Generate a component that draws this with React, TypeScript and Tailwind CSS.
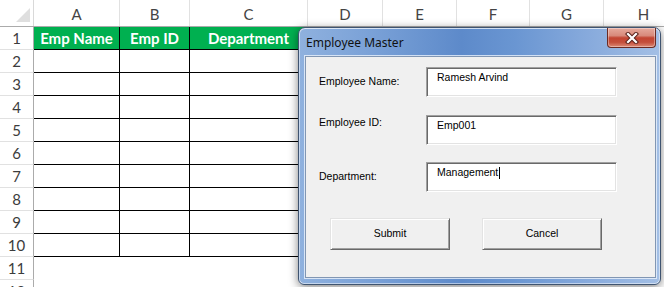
import React from "react";

const colW = [86, 70, 118, 75, 74, 73, 74, 80];
const letters = ["A", "B", "C", "D", "E", "F", "G", "H"];
const greenHead = ["Emp Name", "Emp ID", "Department"];

function HeaderRow() {
  return (
    <div className="flex h-[27px] shrink-0 border-b border-[#ababab] bg-white">
      <div className="relative w-[34px] shrink-0 border-r border-[#d9d9d9]">
        <svg className="absolute left-[16px] top-[8px]" width="14" height="14" viewBox="0 0 14 14">
          <polygon points="14,0 14,14 0,14" fill="#dfdfdf" />
        </svg>
      </div>
      {letters.map((l, i) => (
        <div
          key={l}
          style={{ width: colW[i] }}
          className="flex shrink-0 items-center justify-center border-r border-[#e1e1e1] pt-[2px] text-[15px] text-[#444]"
        >
          {l}
        </div>
      ))}
    </div>
  );
}

function DataRow({ n }: { n: number }) {
  const inTable = n <= 10;
  return (
    <div className="flex h-[23px] shrink-0">
      <div className="flex w-[34px] shrink-0 items-center justify-center border-b border-r border-b-[#e1e1e1] border-r-[#ababab] bg-white pt-[1px] text-[15px] text-[#3c3c3c]">
        {n}
      </div>
      {colW.map((w, i) => {
        const bordered = inTable && i < 3;
        const green = n === 1 && i < 3;
        return (
          <div
            key={i}
            style={{ width: w }}
            className={
              "flex shrink-0 items-center justify-center " +
              (bordered ? "border-b border-r border-black " : "") +
              (green ? "bg-[#00b050] text-[15px] font-bold text-white" : "bg-white")
            }
          >
            {green ? greenHead[i] : null}
          </div>
        );
      })}
    </div>
  );
}

function CloseX() {
  return (
    <svg width="14" height="12" viewBox="0 0 14 12">
      <path d="M3 2 L11 10 M11 2 L3 10" stroke="#5a231c" strokeWidth="4.2" strokeLinecap="square" />
      <path d="M3 2 L11 10 M11 2 L3 10" stroke="#ffffff" strokeWidth="2.2" strokeLinecap="square" />
    </svg>
  );
}

function Field({ label, value, labelTop, cursor }: { label: string; value: string; labelTop: string; cursor?: boolean }) {
  return (
    <div className="flex">
      <div className={"w-[107px] shrink-0 leading-[13px] " + labelTop}>{label}</div>
      <div className="h-[30px] w-[191px] shrink-0 border border-b-white border-l-[#a0a0a0] border-r-white border-t-[#a0a0a0] bg-white pl-[10px] pt-[3px] shadow-[inset_1px_1px_0_#696969,inset_-1px_-1px_0_#e3e3e3]">
        <div className="flex items-center leading-[13px]">
          <span>{value}</span>
          {cursor ? <span className="ml-[1px] h-[12px] w-[1px] bg-black" /> : null}
        </div>
      </div>
    </div>
  );
}

function Btn({ children }: { children: React.ReactNode }) {
  return (
    <div className="flex h-[32px] w-[120px] shrink-0 items-center justify-center border border-b-[#696969] border-l-[#e3e3e3] border-r-[#696969] border-t-[#e3e3e3] bg-[#f0f0f0] shadow-[inset_1px_1px_0_#ffffff,inset_-1px_-1px_0_#a0a0a0]">
      {children}
    </div>
  );
}

function Dialog() {
  return (
    <div className="absolute left-[298px] top-[27px] flex h-[258px] w-[363px] flex-col rounded-b-[6px] rounded-t-[7px] border border-[#3f5470] bg-[linear-gradient(90deg,#8fb1de_0%,#7aa1d7_20%,#5d8aca_45%,#6a96d2_60%,#87aadc_80%,#a3bfe5_100%)] pb-[6px] pl-[6px] pr-[4px] shadow-[0_2px_10px_rgba(0,0,0,0.5),inset_0_1px_0_rgba(255,255,255,0.7),inset_1px_0_0_rgba(255,255,255,0.5),inset_-1px_0_0_rgba(255,255,255,0.5),inset_0_-1px_0_rgba(255,255,255,0.5)]">
      <div className="flex h-[28px] shrink-0 items-start justify-between">
        <div className="pl-[1px] pt-[7px] text-[12px] leading-[16px] text-[#111] [font-family:'Noto_Sans',sans-serif]">
          Employee Master
        </div>
        <div className="flex h-[20px] w-[49px] items-center justify-center rounded-b-[4px] border border-t-0 border-[#6b2a22] bg-[linear-gradient(180deg,#e6aa9d_0%,#d88a7b_40%,#c24532_52%,#c44e3b_75%,#dc8a76_100%)] shadow-[inset_0_0_0_1px_rgba(255,255,255,0.35)]">
          <CloseX />
        </div>
      </div>
      <div className="flex flex-1 flex-col border border-[#8196b3] bg-[#f0f0f0] pl-[13px] pt-[10px] text-[10.5px] text-black shadow-[0_0_0_1px_rgba(235,242,252,0.8)] [font-family:'Liberation_Sans',Arial,sans-serif]">
        <Field label="Employee Name:" value="Ramesh Arvind" labelTop="mt-[8px]" />
        <div className="h-[18px]" />
        <Field label="Employee ID:" value="Emp001" labelTop="mt-[1px]" />
        <div className="h-[17px]" />
        <Field label="Department:" value="Management" labelTop="mt-[8px]" cursor />
        <div className="ml-[11px] mt-[26px] flex gap-[32px]">
          <Btn>Submit</Btn>
          <Btn>Cancel</Btn>
        </div>
      </div>
    </div>
  );
}

export default function App() {
  const rows = Array.from({ length: 12 }, (_, i) => i + 1);
  return (
    <div className="relative h-[287px] w-[664px] overflow-hidden bg-white [font-family:Lato,'Liberation_Sans',sans-serif]">
      <div className="flex flex-col">
        <HeaderRow />
        {rows.map((n) => (
          <DataRow key={n} n={n} />
        ))}
      </div>
      <Dialog />
    </div>
  );
}
